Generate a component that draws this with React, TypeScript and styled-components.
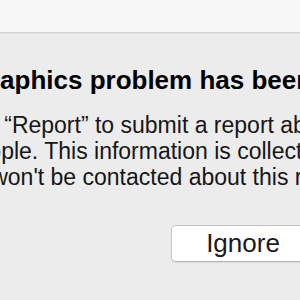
import React from 'react';
import styled, { createGlobalStyle } from 'styled-components';

const GlobalStyle = createGlobalStyle`
  html, body {
    margin: 0;
    padding: 0;
    background: #ececec;
    overflow: hidden;
  }
  body {
    font-family: 'Liberation Sans', Arial, Helvetica, sans-serif;
    -webkit-font-smoothing: antialiased;
  }
`;

const Window = styled.div`
  width: 300px;
  height: 300px;
  overflow: hidden;
  display: flex;
  flex-direction: column;
  background: #ececec;
`;

const TitleBar = styled.div`
  flex: 0 0 auto;
  height: 32px;
  background: #f6f6f6;
  border-bottom: 1px solid #d2d2d2;
  box-shadow: 0 1px 0 #e2e2e2;
`;

const Body = styled.div`
  display: flex;
  flex-direction: column;
  width: 600px;
  padding-top: 32px;
`;

const Heading = styled.h1`
  margin: 0;
  font-size: 26px;
  line-height: 30px;
  font-weight: 700;
  color: #000;
  white-space: nowrap;
  margin-left: -51px;
`;

const Message = styled.div`
  margin-top: 17px;
  display: flex;
  flex-direction: column;
  color: #161616;
  font-size: 23px;
  line-height: 26px;
`;

const Line = styled.span<{ $shift: number }>`
  display: block;
  white-space: nowrap;
  margin-left: ${(p) => p.$shift}px;
`;

const ButtonRow = styled.div`
  display: flex;
  gap: 14px;
  margin-top: 35px;
  margin-left: 171px;
`;

const Button = styled.button`
  width: 144px;
  height: 37px;
  padding: 0;
  background: #ffffff;
  border: 1px solid #c6c6c6;
  border-bottom-color: #b4b4b4;
  border-radius: 5px;
  box-shadow: 0 1px 1px rgba(0, 0, 0, 0.08);
  font-family: 'Liberation Sans', Arial, Helvetica, sans-serif;
  font-size: 26px;
  line-height: 35px;
  color: #1a1a1a;
  text-align: center;
`;

export default function App() {
  return (
    <Window>
      <GlobalStyle />
      <TitleBar />
      <Body>
        <Heading>A graphics problem has been detected</Heading>
        <Message>
          <Line $shift={-52}>Click “Report” to submit a report about this problem to</Line>
          <Line $shift={-27}>Apple. This information is collected anonymously.</Line>
          <Line $shift={-54}>You won't be contacted about this report.</Line>
        </Message>
        <ButtonRow>
          <Button>Ignore</Button>
          <Button>Report</Button>
        </ButtonRow>
      </Body>
    </Window>
  );
}
